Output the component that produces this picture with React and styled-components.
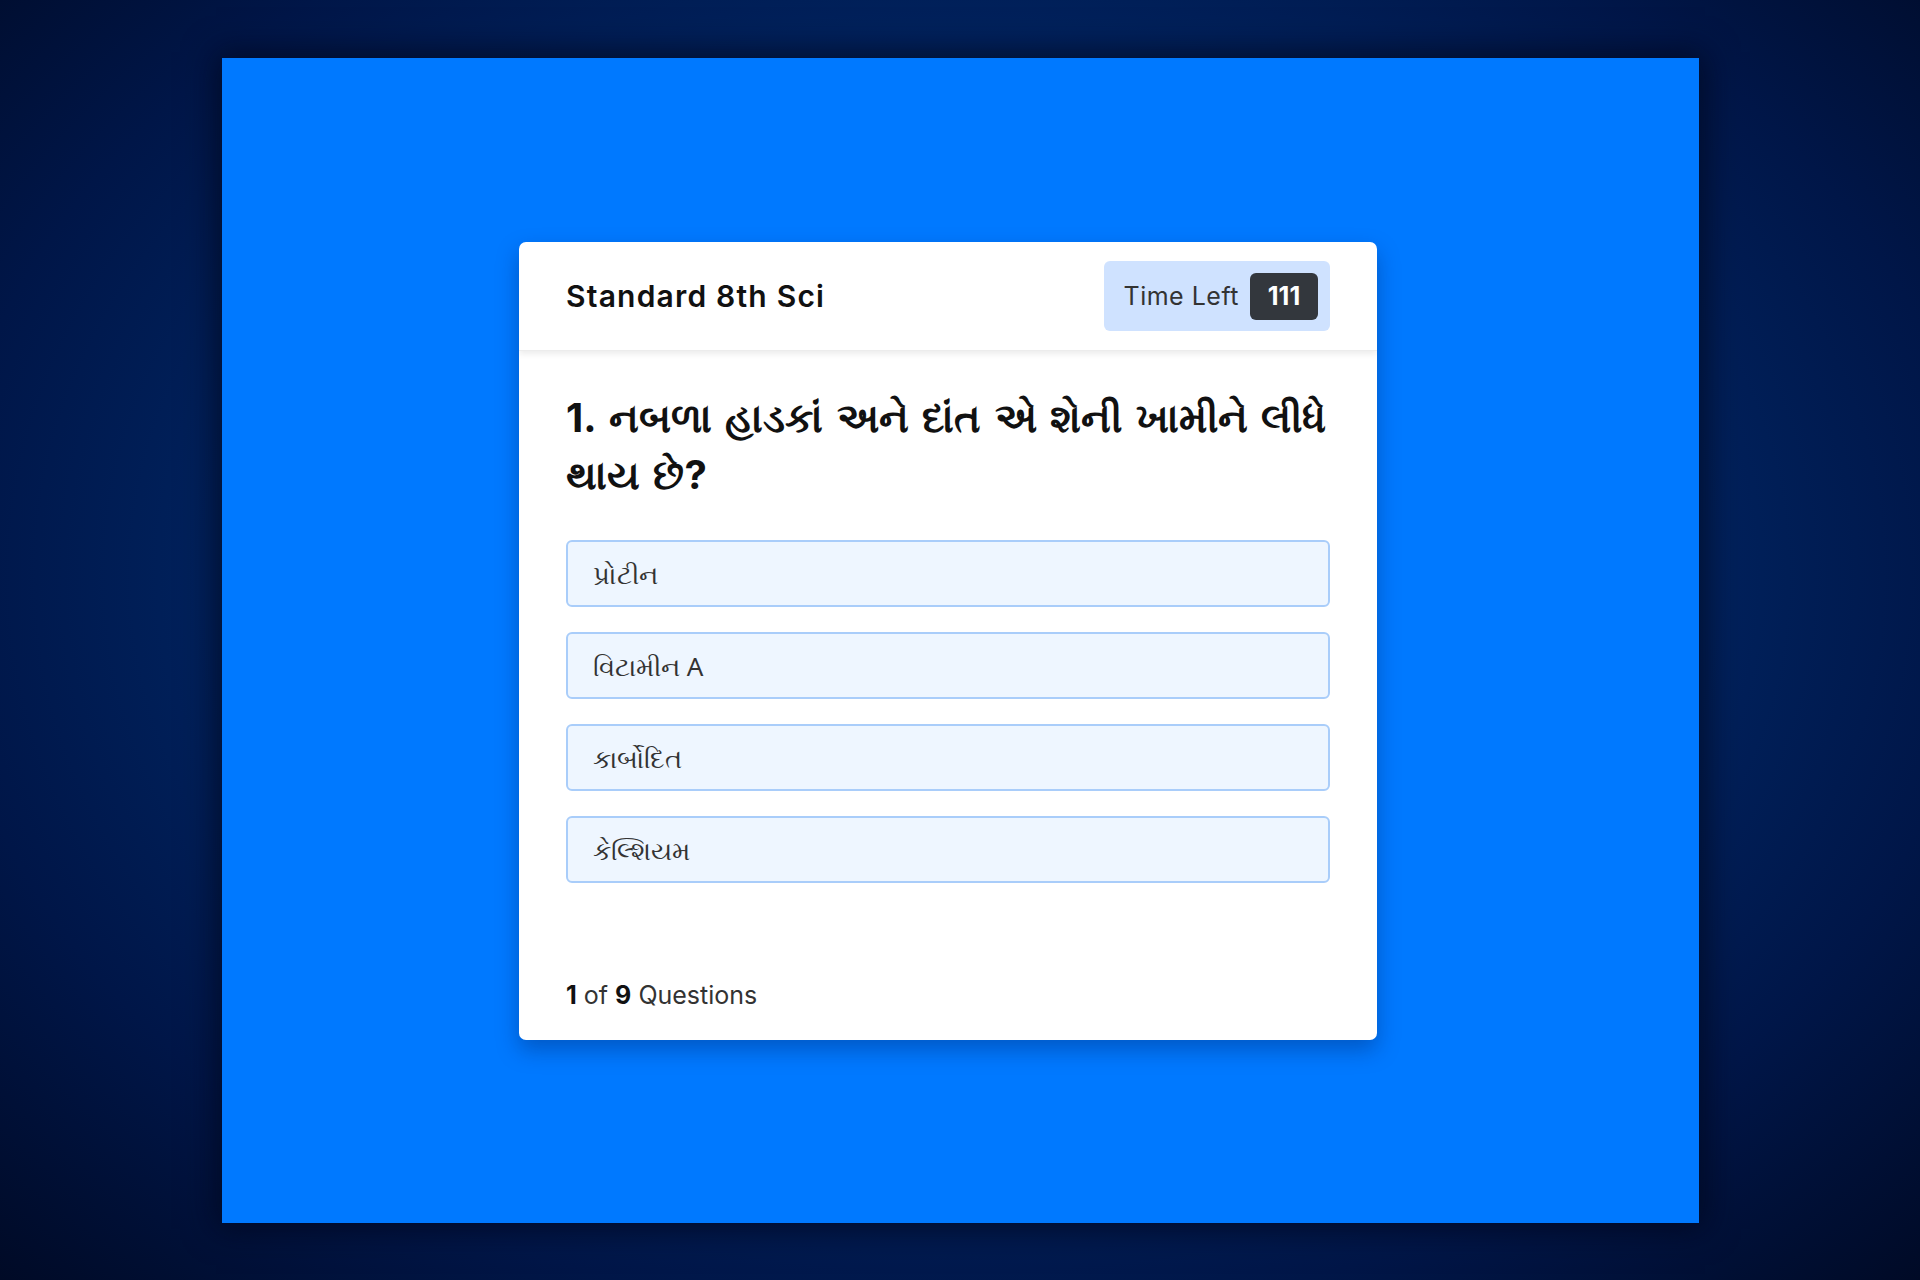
import React from "react";
import styled, {createGlobalStyle} from "styled-components";

const GlobalStyle = createGlobalStyle`
  html, body {
    margin: 0;
    padding: 0;
  }
  body {
    font-family: "Inter", "Noto Sans", "Liberation Sans", sans-serif;
    background: #001a4d;
  }
`;

const questions = [
  {
    text: "નબળા હાડકાં અને દાંત એ શેની ખામીને લીધે થાય છે?",
    options: ["પ્રોટીન", "વિટામીન A", "કાર્બોદિત", "કેલ્શિયમ"],
  },
];

const App = () => {
  const current = 0;
  const q = questions[current];

  return (
    <>
      <GlobalStyle />
      <Page>
        <Frame>
          <QuizCard>
            <Header>
              <Title>Standard 8th Sci</Title>
              <Timer>
                <span>Time Left</span>
                <TimerValue>111</TimerValue>
              </Timer>
            </Header>

            <Body>
              <Question>{`${current + 1}. ${q.text}`}</Question>

              <OptionList>
                {q.options.map((opt) => (
                  <Option key={opt}>{opt}</Option>
                ))}
              </OptionList>

              <Footer>
                <b>1</b> of <b>9</b> Questions
              </Footer>
            </Body>
          </QuizCard>
        </Frame>
      </Page>
    </>
  );
};

const Page = styled.div`
  width: 100%;
  height: 1280px;
  display: flex;
  align-items: center;
  justify-content: center;
  background: radial-gradient(
    ellipse at 50% 45%,
    #00398a 0%,
    #002766 45%,
    #001648 75%,
    #000a26 100%
  );
`;

const Frame = styled.div`
  width: 1477px;
  height: 1165px;
  background: #0079ff;
  box-shadow: 0 0 30px 6px rgba(0, 5, 25, 0.7);
  display: flex;
  align-items: center;
  justify-content: center;
  padding-right: 24px;
  padding-top: 2px;
  box-sizing: border-box;
`;

const QuizCard = styled.div`
  width: 858px;
  height: 798px;
  background: #ffffff;
  border-radius: 7px;
  box-shadow: 0 10px 22px rgba(0, 30, 90, 0.35);
  display: flex;
  flex-direction: column;
  overflow: hidden;
`;

const Header = styled.div`
  height: 109px;
  flex-shrink: 0;
  padding: 0 47px;
  display: flex;
  align-items: center;
  justify-content: space-between;
  border-bottom: 1px solid #ececec;
  box-shadow: 0 3px 6px rgba(0, 0, 0, 0.08);
  position: relative;
  z-index: 1;
  box-sizing: border-box;
`;

const Title = styled.h1`
  margin: 0;
  font-size: 30px;
  font-weight: 600;
  color: #111;
  letter-spacing: 1.2px;
`;

const Timer = styled.div`
  height: 70px;
  padding: 0 12px 0 20px;
  display: flex;
  align-items: center;
  gap: 11px;
  background: #cfe2ff;
  border-radius: 6px;
  font-size: 25px;
  letter-spacing: 0.5px;
  color: #333;
  box-sizing: border-box;
`;

const TimerValue = styled.span`
  width: 68px;
  height: 47px;
  display: flex;
  align-items: center;
  justify-content: center;
  background: #33373d;
  color: #fff;
  border-radius: 6px;
  font-size: 25px;
  font-weight: 700;
  letter-spacing: 0;
`;

const Body = styled.div`
  flex: 1;
  padding: 38px 47px 30px;
  display: flex;
  flex-direction: column;
`;

const Question = styled.h2`
  margin: 0 0 37px;
  font-size: 40px;
  line-height: 57px;
  font-weight: 700;
  word-spacing: 4px;
  color: #111;
`;

const OptionList = styled.div`
  display: flex;
  flex-direction: column;
  gap: 25px;
`;

const Option = styled.button`
  height: 67px;
  padding: 0 25px;
  display: flex;
  align-items: center;
  background: #eef6ff;
  border: 2px solid #a9cdfa;
  border-radius: 6px;
  font-family: "Noto Sans", "Liberation Sans", sans-serif;
  font-size: 26px;
  color: #333;
  text-align: left;
  cursor: pointer;
  box-sizing: border-box;
`;

const Footer = styled.div`
  margin-top: auto;
  font-size: 25px;
  color: #333;

  b {
    font-weight: 700;
    color: #111;
  }
`;

export default App;
